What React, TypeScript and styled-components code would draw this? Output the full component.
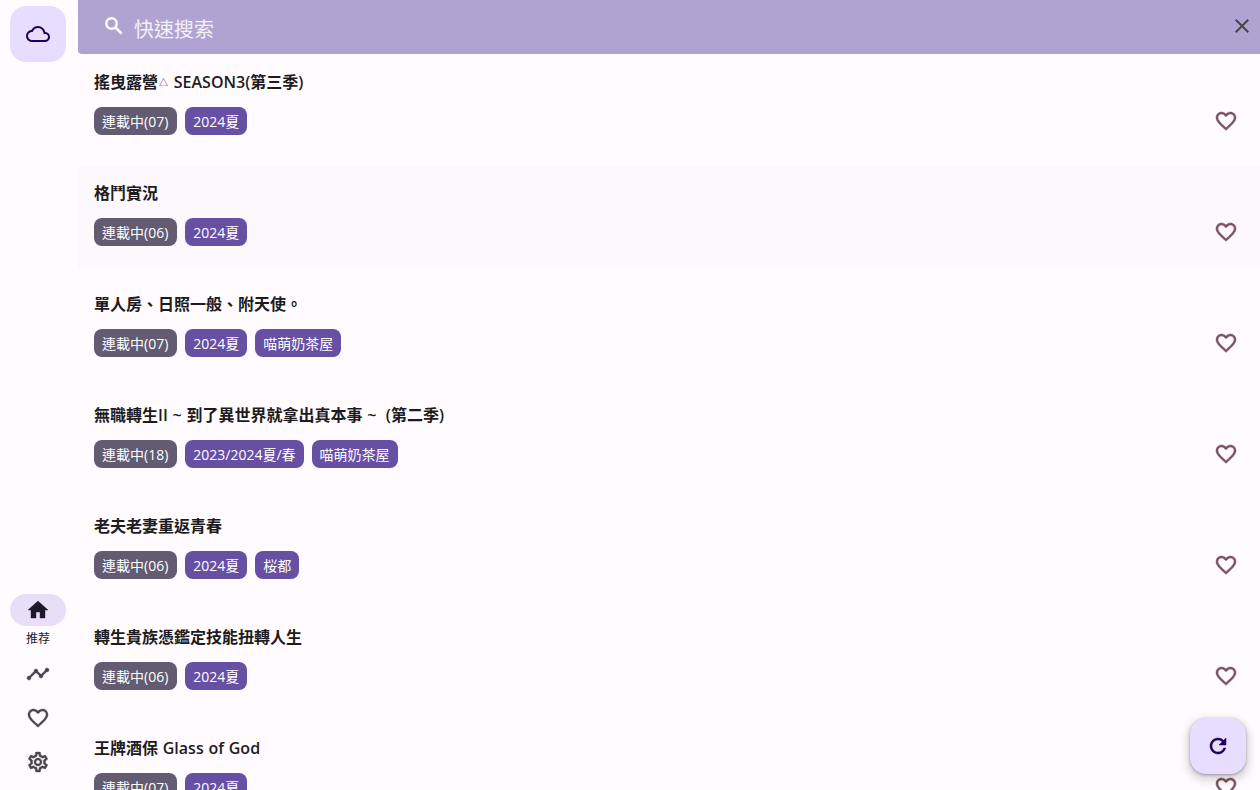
import type { ReactNode } from "react";
import styled, { createGlobalStyle } from "styled-components";
import {
  MdClose,
  MdFavoriteBorder,
  MdHome,
  MdOutlineCloud,
  MdOutlineSettings,
  MdRefresh,
  MdTimeline,
} from "react-icons/md";

const GlobalStyle = createGlobalStyle`
  html, body {
    margin: 0;
    height: 100%;
    overflow: hidden;
    background: #fffbff;
    font-family: "Open Sans", "Noto Sans CJK TC", sans-serif;
  }
  #root {
    height: 100%;
  }
`;

const Shell = styled.div`
  display: flex;
  height: 790px;
  position: relative;
  overflow: hidden;
`;

const Rail = styled.nav`
  width: 78px;
  flex: none;
  display: flex;
  flex-direction: column;
  align-items: center;
  padding: 6px 2px 12px 0;
  box-sizing: border-box;
`;

const LogoButton = styled.div`
  width: 56px;
  height: 56px;
  border-radius: 16px;
  background: #e9ddff;
  color: #21005d;
  display: flex;
  align-items: center;
  justify-content: center;
  margin-bottom: auto;
`;

const RailItem = styled.div<{ $gap?: number }>`
  display: flex;
  flex-direction: column;
  align-items: center;
  margin-bottom: ${({ $gap }) => $gap ?? 0}px;
`;

const RailPill = styled.div<{ $active?: boolean }>`
  width: 56px;
  height: 32px;
  border-radius: 16px;
  background: ${({ $active }) => ($active ? "#e8def8" : "transparent")};
  color: ${({ $active }) => ($active ? "#1d192b" : "#49454f")};
  display: flex;
  align-items: center;
  justify-content: center;

  svg path:last-child {
    stroke: currentColor;
    stroke-width: 0.4;
  }
`;

const RailLabel = styled.span`
  font-size: 12px;
  line-height: 16px;
  margin-top: 5px;
  margin-bottom: -1px;
  color: #1d1b20;
`;

const Main = styled.main`
  flex: 1;
  min-width: 0;
  display: flex;
  flex-direction: column;
`;

const SearchBar = styled.div`
  height: 54px;
  flex: none;
  background: #b1a3d1;
  border-bottom-left-radius: 4px;
  display: flex;
  align-items: center;
  padding: 0 6px 0 24px;
`;

const SearchIcon = styled.svg`
  width: 24px;
  height: 24px;
  flex: none;
  margin-top: -2px;
  fill: none;
  stroke: #fff;
  stroke-width: 2.5;
`;

const SearchText = styled.span`
  font-size: 20px;
  margin-left: 8px;
  margin-top: 2px;
  flex: 1;
  color: #fff;
  opacity: 0.85;
`;

const CloseIcon = styled(MdClose)`
  color: #49454f;
  margin-top: -2px;
`;

const List = styled.div`
  flex: 1;
  min-height: 0;
  overflow: hidden;
  display: flex;
  flex-direction: column;
  gap: 9px;
  padding-top: 1px;
`;

const Row = styled.div<{ $hover?: boolean }>`
  flex: none;
  height: 102px;
  box-sizing: border-box;
  padding: 15px 22px 22px 16px;
  display: flex;
  justify-content: space-between;
  align-items: flex-end;
  background: ${({ $hover }) => ($hover ? "#fcf8fc" : "transparent")};
`;

const RowBody = styled.div`
  display: flex;
  flex-direction: column;
  gap: 13px;
`;

const Title = styled.div`
  font-size: 16px;
  font-weight: 600;
  line-height: 24px;
  height: 24px;
  color: #1d1b20;
  white-space: pre;
  word-spacing: 0.6px;
`;

const TinyMark = styled.span`
  font-size: 9px;
  font-weight: 400;
  line-height: 1;
  margin: 0 1px;
  vertical-align: 2px;
`;

const Tags = styled.div`
  display: flex;
  gap: 8px;
`;

const Tag = styled.span`
  height: 28px;
  box-sizing: border-box;
  padding: 0 8px;
  border-radius: 8px;
  background: #6750a4;
  color: #fff;
  font-size: 14px;
  line-height: 29px;
`;

const StatusTag = styled(Tag)`
  padding-right: 9px;
  background: #625b71;
`;

const HeartIcon = styled(MdFavoriteBorder)`
  color: #7d5260;
  flex: none;
  margin-bottom: 2px;

  path:last-child {
    stroke: currentColor;
    stroke-width: 0.5;
  }
`;

const Fab = styled.button`
  position: absolute;
  right: 14px;
  bottom: 16px;
  width: 56px;
  height: 56px;
  border: none;
  border-radius: 16px;
  background: #e9ddff;
  color: #21005d;
  display: flex;
  align-items: center;
  justify-content: center;
  box-shadow: 0 4px 8px 3px rgba(0, 0, 0, 0.15), 0 1px 3px rgba(0, 0, 0, 0.3);
`;

const RefreshIcon = styled(MdRefresh)`
  path:last-child {
    stroke: currentColor;
    stroke-width: 0.5;
  }
`;

type Item = {
  id: number;
  title: ReactNode;
  status: string;
  tags: string[];
  hover?: boolean;
};

const items: Item[] = [
  {
    id: 1,
    title: (
      <>
        搖曳露營<TinyMark>△</TinyMark> SEASON3(第三季)
      </>
    ),
    status: "連載中(07)",
    tags: ["2024夏"],
  },
  { id: 2, title: "格鬥實況", status: "連載中(06)", tags: ["2024夏"], hover: true },
  { id: 3, title: "單人房、日照一般、附天使。", status: "連載中(07)", tags: ["2024夏", "喵萌奶茶屋"] },
  {
    id: 4,
    title: "無職轉生II ~ 到了異世界就拿出真本事 ~  (第二季)",
    status: "連載中(18)",
    tags: ["2023/2024夏/春", "喵萌奶茶屋"],
  },
  { id: 5, title: "老夫老妻重返青春", status: "連載中(06)", tags: ["2024夏", "桜都"] },
  { id: 6, title: "轉生貴族憑鑑定技能扭轉人生", status: "連載中(06)", tags: ["2024夏"] },
  { id: 7, title: "王牌酒保 Glass of God", status: "連載中(07)", tags: ["2024夏"] },
];

export default function App() {
  return (
    <Shell>
      <GlobalStyle />
      <Rail>
        <LogoButton>
          <MdOutlineCloud size={24} />
        </LogoButton>
        <RailItem $gap={12}>
          <RailPill $active>
            <MdHome size={24} />
          </RailPill>
          <RailLabel>推荐</RailLabel>
        </RailItem>
        <RailItem $gap={12}>
          <RailPill>
            <MdTimeline size={24} />
          </RailPill>
        </RailItem>
        <RailItem $gap={12}>
          <RailPill>
            <MdFavoriteBorder size={24} />
          </RailPill>
        </RailItem>
        <RailItem>
          <RailPill>
            <MdOutlineSettings size={24} />
          </RailPill>
        </RailItem>
      </Rail>
      <Main>
        <SearchBar>
          <SearchIcon viewBox="0 0 24 24">
            <circle cx="9.5" cy="9.5" r="5.2" />
            <path d="M13.5 13.5 19.5 19.5" />
          </SearchIcon>
          <SearchText>快速搜索</SearchText>
          <CloseIcon size={24} />
        </SearchBar>
        <List>
          {items.map((item) => (
            <Row key={item.id} $hover={item.hover}>
              <RowBody>
                <Title>{item.title}</Title>
                <Tags>
                  <StatusTag>{item.status}</StatusTag>
                  {item.tags.map((tag) => (
                    <Tag key={tag}>{tag}</Tag>
                  ))}
                </Tags>
              </RowBody>
              <HeartIcon size={24} />
            </Row>
          ))}
        </List>
      </Main>
      <Fab>
        <RefreshIcon size={24} />
      </Fab>
    </Shell>
  );
}
